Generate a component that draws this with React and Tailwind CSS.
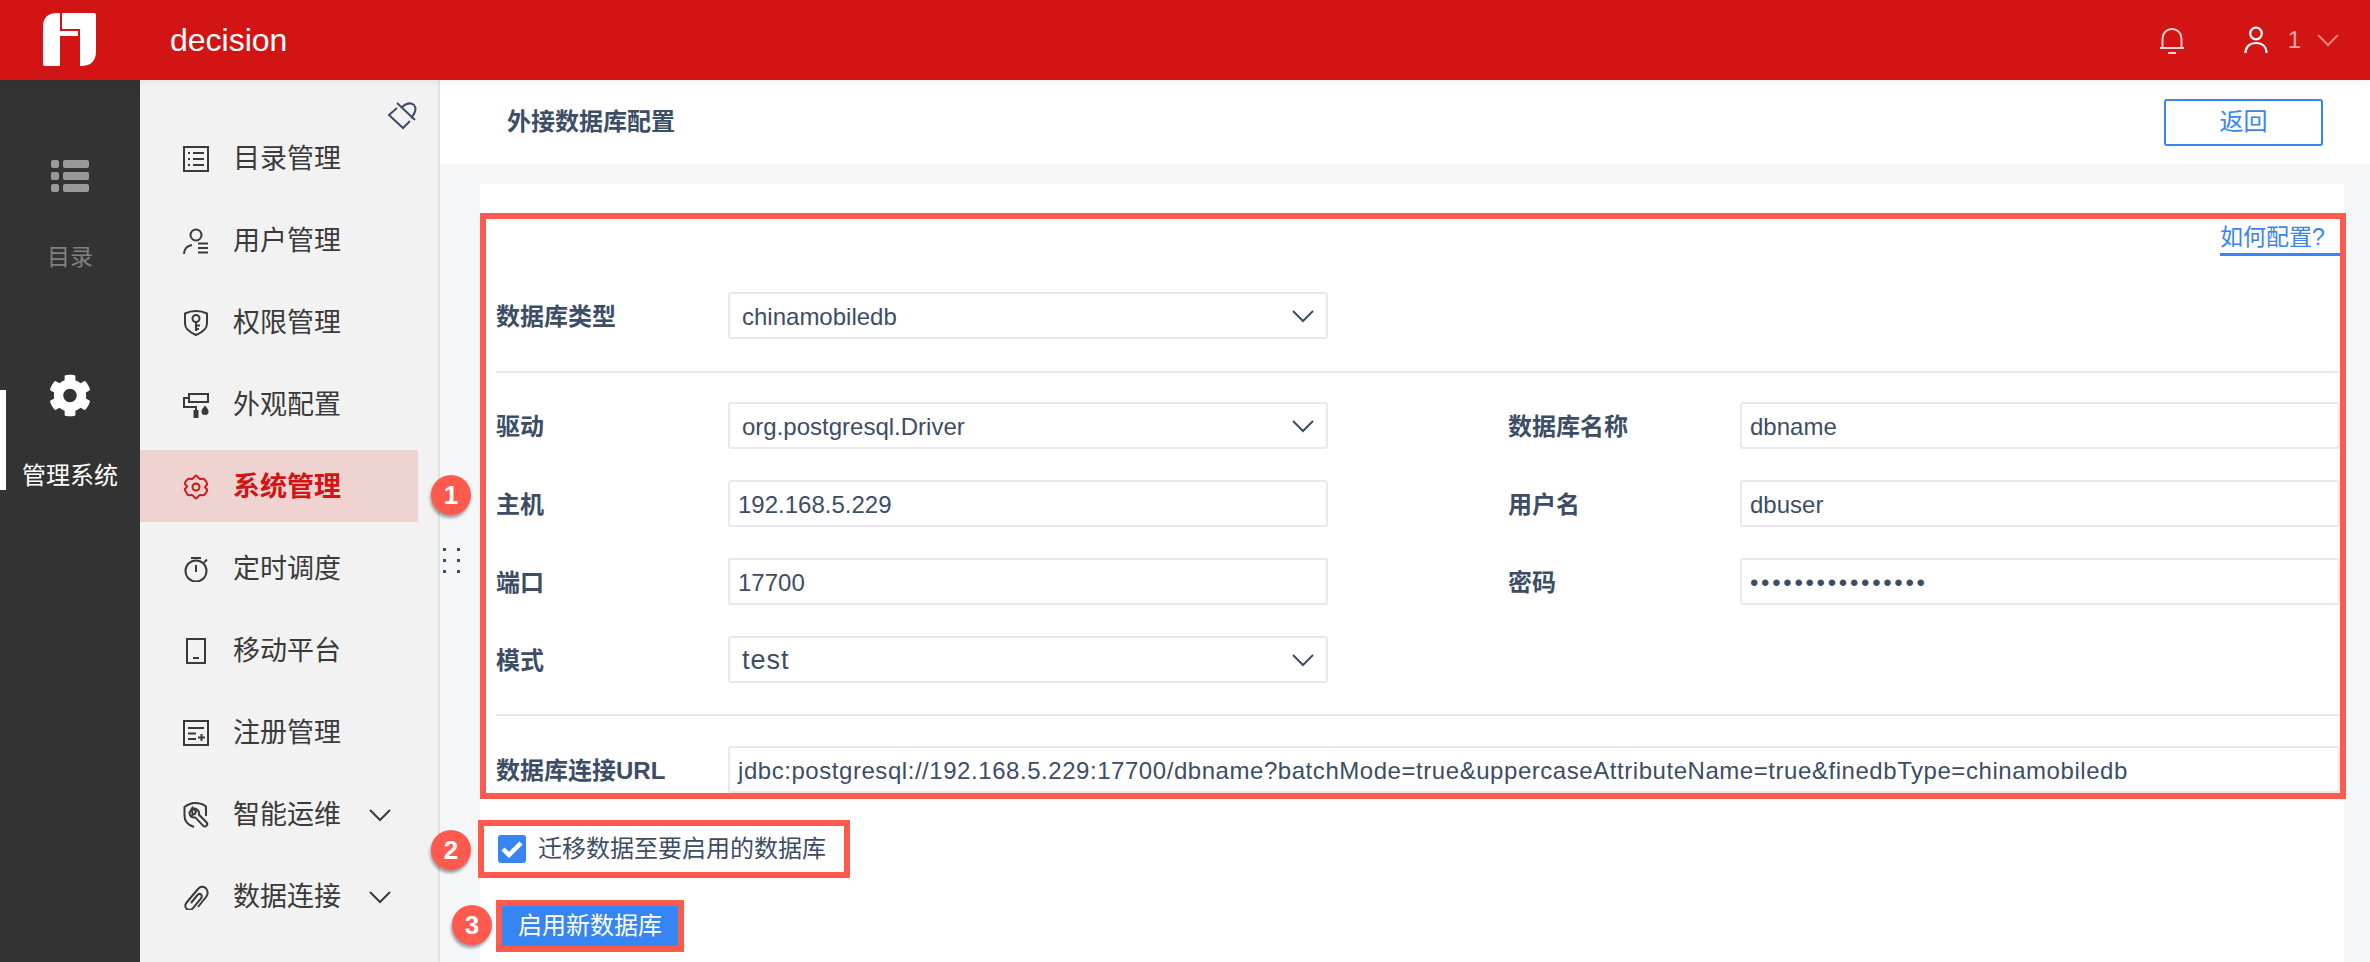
import React from "react";
import { FaCog } from "react-icons/fa";

const FONT = "font-['Liberation_Sans','Noto_Sans_CJK_SC',sans-serif]";

const Chevron = ({ className = "", color = "#333" }) => (
  <svg viewBox="0 0 22 13" className={`w-[22px] h-[13px] shrink-0 ${className}`} fill="none" stroke={color} strokeWidth="2">
    <path d="M1 1l10 10L21 1" />
  </svg>
);

const Ico = ({ children, color = "#3a3a3a" }) => (
  <svg viewBox="0 0 26 26" className="w-[26px] h-[26px] shrink-0" fill="none" stroke={color} strokeWidth="2">
    {children}
  </svg>
);

const icons = {
  list: (
    <Ico>
      <rect x="1" y="1" width="24" height="24" />
      <path d="M5 7h2M10 7h11M5 13h2M10 13h11M5 19h2M10 19h11" />
    </Ico>
  ),
  user: (
    <Ico>
      <circle cx="13" cy="7" r="5.5" />
      <path d="M1 26c0-5 3-8 8-9M15 15.500h10M15 20h10M15 24.500h10" />
    </Ico>
  ),
  key: (
    <Ico>
      <path d="M13 1c4 0 8 1 11 2.500v10c0 5-5 9-11 11.500-6-2.500-11-6.500-11-11.500v-10C5 2 9 1 13 1z" />
      <circle cx="13" cy="8.500" r="3.500" />
      <path d="M13 12v9M13 15.500h4M13 19h3" />
    </Ico>
  ),
  roller: (
    <Ico>
      <rect x="6" y="2" width="19" height="8" />
      <path d="M6 6H1v9h12v3" />
      <rect x="10.500" y="18" width="5" height="8" fill="#3a3a3a" stroke="none" />
      <path d="M22 13.500c2 2.500 3.500 4 3.500 6a3.500 3.500 0 0 1-7 0c0-2 1.500-3.500 3.500-6z" fill="#3a3a3a" stroke="none" />
    </Ico>
  ),
  gear: (
    <Ico color="#d21414">
      <path d="M13 1.500c1 0 2 2.500 3.500 3.200 1.500.6 4-.4 4.800.4.800.800 2.700 3.800 2.900 4.800.2 1-2.200 2-2.200 3.100s2.400 2.100 2.200 3.100c-.2 1-2.100 4-2.900 4.800-.8.800-3.300-.2-4.800.4-1.500.7-2.500 3.200-3.500 3.200s-2-2.500-3.500-3.200c-1.500-.6-4 .4-4.800-.4C3.900 19.600 2 16.600 1.800 15.600c-.2-1 2.200-2 2.200-3.100S1.600 10.400 1.800 9.400c.2-1 2.100-3.500 2.900-4.300.8-.8 3.300.2 4.800-.4C11 4 12 1.500 13 1.500z" />
      <circle cx="13" cy="13" r="3.500" />
    </Ico>
  ),
  timer: (
    <Ico>
      <circle cx="13" cy="15" r="10.500" />
      <path d="M8 2h10M13 9v7M21 6.500l3-3" />
    </Ico>
  ),
  phone: (
    <Ico>
      <rect x="4" y="1" width="18" height="24" />
      <path d="M10 20h6" />
    </Ico>
  ),
  reg: (
    <Ico>
      <rect x="1" y="1" width="24" height="24" />
      <path d="M5 8h16M5 13.500h8M5 19h8M15 17.500h7M18.500 14v7" />
    </Ico>
  ),
  ops: (
    <Ico>
      <path d="M11 25C5 23 1.500 19 1.500 14V5C5 2.500 9 1 12 1c4 0 8 1 11 3.500V14" />
      <path d="M9 6.500l-2.500 4c0 3 2 5 5 5l1 .1 7.500 8c1 1 2.500 1 3.500 0s1-2.300 0-3.300l-7.500-7.500c.5-3-1-6-5-6.500l-1 .1 3 3-1 2.500-2.500 1z" />
    </Ico>
  ),
  clip: (
    <Ico>
      <path d="M15 23L23 13C25.500 10 25 6 22.500 4C20 2 17 2.500 15 5L4 18C1.500 21 2 24 4 25C6 26.500 8.500 26 10 24L18 14.500C19 13 19 11.500 18 10.500C17 9.500 15.500 10 14.500 11L8 19" />
    </Ico>
  ),
};

const menu = [
  ["list", "目录管理"],
  ["user", "用户管理"],
  ["key", "权限管理"],
  ["roller", "外观配置"],
  ["gear", "系统管理", "active"],
  ["timer", "定时调度"],
  ["phone", "移动平台"],
  ["reg", "注册管理"],
  ["ops", "智能运维", "more"],
  ["clip", "数据连接", "more"],
];

const Label = ({ children }) => (
  <div className="w-[232px] shrink-0 pt-[2px] text-[24px] font-bold text-[#3d4d66]">{children}</div>
);

const Box = ({ children, className = "" }) => (
  <div className={`h-[47px] pt-[2px] border-2 border-[#e8e8ee] rounded-[3px] bg-white flex items-center text-[24px] leading-none text-[#3d4d66] whitespace-nowrap ${className}`}>
    {children}
  </div>
);

const Select = ({ value, big }) => (
  <Box className="w-[600px] pl-[12px] pr-[12px] justify-between">
    <span className={big ? "text-[27px] tracking-[1px]" : ""}>{value}</span>
    <Chevron color="#3d4d66" />
  </Box>
);

const Field = ({ children, className = "" }) => <Box className={`pl-[8px] ${className}`}>{children}</Box>;

const Badge = ({ n, className }) => (
  <div className={`absolute w-[40px] h-[40px] rounded-full bg-[#ff5a4d] text-white text-[26px] font-bold flex items-center justify-center shadow-[-1px_3px_3px_rgba(0,0,0,0.35)] ${className}`}>
    {n}
  </div>
);

const Row = ({ leftLabel, left, rightLabel, right }) => (
  <div className="flex items-center">
    <div className="w-[1012px] shrink-0 flex items-center">
      <Label>{leftLabel}</Label>
      {left}
    </div>
    {rightLabel && (
      <div className="flex-1 flex items-center">
        <Label>{rightLabel}</Label>
        {right}
      </div>
    )}
  </div>
);

export default function App() {
  return (
    <div className={`w-[2370px] h-[962px] overflow-hidden flex flex-col bg-[#f5f6f8] ${FONT}`}>
      <header className="relative z-10 h-[80px] shrink-0 bg-[#d21414] flex items-center shadow-[0_2px_10px_rgba(0,0,0,0.06)]">
        <svg viewBox="0 0 54 54" className="ml-[43px] w-[54px] h-[54px] shrink-0" fill="#fff">
          <path d="M0 14Q0 0 14 0h3v18h18v5H17v30H2q-2 0-2-2z" />
          <path d="M19 0h32q2 0 2 2v36q0 15-15 15h-1V16H19z" />
        </svg>
        <div className="ml-[73px] text-[32px] text-white">decision</div>
        <div className="ml-auto flex items-center">
          <svg viewBox="0 0 26 27" className="w-[26px] h-[27px]" fill="none" stroke="#fbd0d0" strokeWidth="2">
            <path d="M1 21h24M3.500 21V11.500a9.500 9.500 0 0 1 19 0V21M9 26h8" />
          </svg>
          <svg viewBox="0 0 24 28" className="ml-[59px] w-[24px] h-[28px]" fill="none" stroke="#fff" strokeWidth="2.200">
            <circle cx="12" cy="7.500" r="5.800" />
            <path d="M1.500 27c0-6 4-10 10.500-10s10.500 4 10.500 10" />
          </svg>
          <span className="ml-[20px] text-[24px] text-[#f6a5a5] leading-none">1</span>
          <Chevron color="#f08080" className="ml-[16px] mr-[31px]" />
        </div>
      </header>

      <div className="flex-1 min-h-0 flex">
        <aside className="w-[140px] shrink-0 bg-[#333333] flex flex-col items-center">
          <svg viewBox="0 0 38 32" className="mt-[80px] w-[38px] h-[32px]" fill="#999">
            <rect x="0" y="0" width="8" height="8" rx="2" />
            <rect x="12" y="0" width="26" height="8" rx="2" />
            <rect x="0" y="12" width="8" height="8" rx="2" />
            <rect x="12" y="12" width="26" height="8" rx="2" />
            <rect x="0" y="24" width="8" height="8" rx="2" />
            <rect x="12" y="24" width="26" height="8" rx="2" />
          </svg>
          <div className="mt-[51px] text-[23px] leading-[28px] text-[#808080]">目录</div>
          <div className="relative mt-[119px] w-full h-[100px] flex flex-col items-center">
            <div className="absolute left-0 top-0 w-[6px] h-[100px] bg-white" />
            <FaCog className="mt-[-16px] text-white text-[44px]" />
            <div className="mt-[45px] text-[24px] leading-[28px] text-white whitespace-nowrap">管理系统</div>
          </div>
        </aside>

        <nav className="relative w-[300px] shrink-0 bg-[#f2f2f2] border-r-2 border-[#e2e2e2] pt-[42px]">
          <svg viewBox="0 0 34 34" className="absolute left-[245px] top-[20px] w-[34px] h-[34px]" fill="none" stroke="#3d4d66" strokeWidth="2">
            <path d="M12 3l18 17M12 8l-8 7 14 13 7-7M17 7Q24 1 29 5Q33 10 26 18" />
          </svg>
          {menu.map(([ic, text, flag]) => (
            <div
              key={text}
              className={`w-[278px] h-[72px] mb-[10px] pl-[43px] pt-[2px] flex items-center gap-[24px] ${flag === "active" ? "bg-[#efd3d0] text-[#d21414] font-bold" : "text-[#3a3a3a]"}`}
            >
              {icons[ic]}
              <span className="text-[27px] leading-none whitespace-nowrap">{text}</span>
              {flag === "more" && <Chevron color="#3a3a3a" className="ml-[4px]" />}
            </div>
          ))}
        </nav>

        <main className="relative flex-1 min-w-0 flex flex-col">
          <div className="h-[84px] shrink-0 bg-white flex items-center pl-[67px] pr-[47px]">
            <div className="text-[24px] font-bold text-[#3d4d66]">外接数据库配置</div>
            <div className="ml-auto w-[159px] h-[47px] border-2 border-[#3685f2] rounded-[3px] text-[#3685f2] text-[24px] flex items-center justify-center">
              返回
            </div>
          </div>

          <div className="ml-[40px] mt-[20px] w-[1864px] flex-1 bg-white pt-[29px]">
            <div className="w-[1866px] h-[586px] border-[6px] border-[#ff5a4d] pl-[10px] flex flex-col">
              <div className="h-[37px] shrink-0 flex justify-end">
                <div className="w-[120px] h-[37px] border-b-[3px] border-[#3685f2] text-[#3685f2] text-[23px] leading-[36px] whitespace-nowrap">
                  如何配置?
                </div>
              </div>
              <div className="mt-[36px]">
                <Row leftLabel="数据库类型" left={<Select value="chinamobiledb" />} />
              </div>
              <div className="mt-[32px] h-[2px] shrink-0 bg-[#e8e8ee]" />
              <div className="mt-[29px] flex flex-col gap-[31px]">
                <Row leftLabel="驱动" left={<Select value="org.postgresql.Driver" />} rightLabel="数据库名称" right={<Field className="flex-1">dbname</Field>} />
                <Row leftLabel="主机" left={<Field className="w-[600px]">192.168.5.229</Field>} rightLabel="用户名" right={<Field className="flex-1">dbuser</Field>} />
                <Row leftLabel="端口" left={<Field className="w-[600px]">17700</Field>} rightLabel="密码" right={<Field className="flex-1"><span className="tracking-[2.700px]">••••••••••••••••</span></Field>} />
                <Row leftLabel="模式" left={<Select value="test" big />} />
              </div>
              <div className="mt-[31px] h-[2px] shrink-0 bg-[#e8e8ee]" />
              <div className="mt-[30px] flex items-center">
                <Label>数据库连接URL</Label>
                <Field className="flex-1 tracking-[0.55px]">jdbc:postgresql://192.168.5.229:17700/dbname?batchMode=true&amp;uppercaseAttributeName=true&amp;finedbType=chinamobiledb</Field>
              </div>
            </div>

            <div className="mt-[21px] ml-[-2px] w-[372px] h-[58px] border-[6px] border-[#ff5a4d] pl-[14px] flex items-center gap-[12px]">
              <div className="w-[28px] h-[28px] rounded-[3px] bg-[#3685f2] flex items-center justify-center">
                <svg viewBox="0 0 22 18" className="w-[22px] h-[18px]" fill="none" stroke="#fff" strokeWidth="4.500">
                  <path d="M2 9l6 6L20 3" />
                </svg>
              </div>
              <span className="text-[24px] leading-none text-[#3d4d66] whitespace-nowrap">迁移数据至要启用的数据库</span>
            </div>

            <div className="mt-[22px] ml-[16px] w-[188px] h-[52px] border-[6px] border-[#ff5a4d] bg-[#3685f2] text-white text-[24px] flex items-center justify-center">
              启用新数据库
            </div>
          </div>

          <div className="absolute left-[3px] top-[468px] grid grid-cols-2 gap-x-[11px] gap-y-[8px]">
            {[0, 1, 2, 3, 4, 5].map((i) => (
              <div key={i} className="w-[3px] h-[3px] bg-[#3d4d66]" />
            ))}
          </div>
          <Badge n="1" className="left-[-9px] top-[395px]" />
          <Badge n="2" className="left-[-9px] top-[750px]" />
          <Badge n="3" className="left-[12px] top-[825px]" />
        </main>
      </div>
    </div>
  );
}
